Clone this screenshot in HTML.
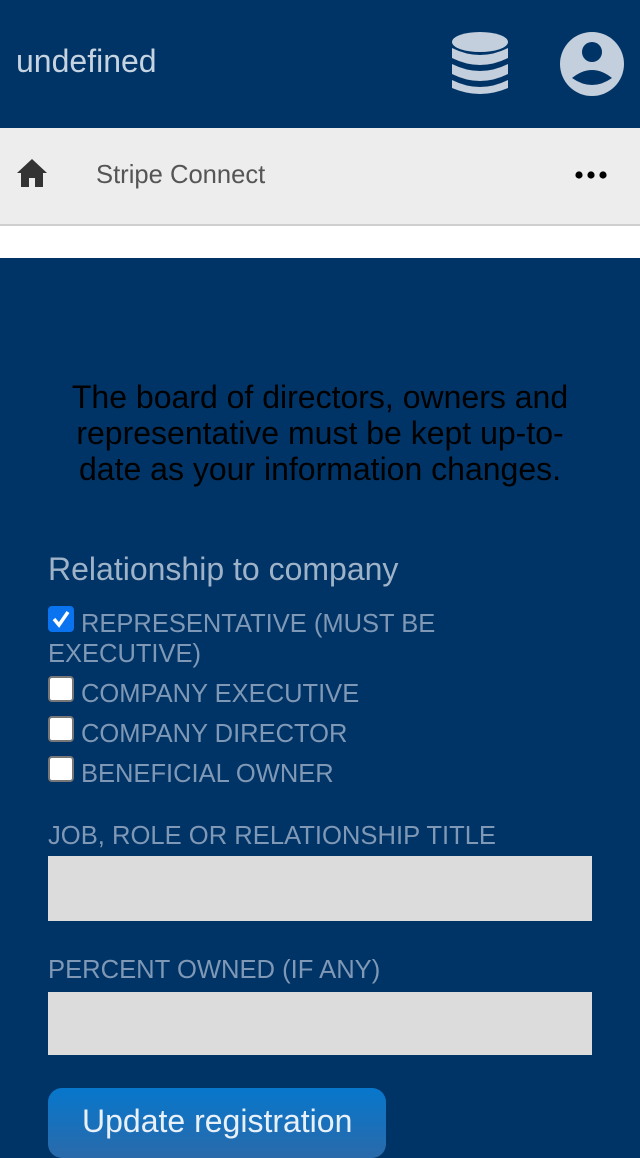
<!DOCTYPE html>
<html><head><style>
*{margin:0;padding:0;box-sizing:border-box}
body{width:640px;height:1136px;overflow:hidden;background:#003366;font-family:"Liberation Sans",sans-serif}
.hdr{position:absolute;top:0;left:0;width:640px;height:128px;background:#003366}
.hdr .t{position:absolute;left:16px;top:43px;font-size:32px;color:#c6d3e0}
.bar{position:absolute;top:128px;left:0;width:640px;height:98px;background:#ededed;border-bottom:2px solid #cfcfcf}
.bar .t{position:absolute;left:96px;top:33px;font-size:25.6px;color:#555}
.white{position:absolute;top:226px;left:0;width:640px;height:32px;background:#fff}
.p{position:absolute;top:379px;left:56px;width:528px;text-align:center;font-size:32px;line-height:36px;color:#000}
.h{position:absolute;top:551px;left:48px;font-size:32px;color:#9fb3c8}
.cb{position:absolute;left:48px;width:26px;height:26px;background:#fff;border:2px solid #777;border-radius:4px}
.lb{position:absolute;left:48px;font-size:25.5px;line-height:30px;color:#7f98b5;width:480px}
.fl{position:absolute;left:48px;font-size:25.6px;color:#7f98b5}
.in{position:absolute;left:48px;width:544px;background:#dcdcdc}
.btn{position:absolute;left:48px;top:1088px;width:338px;height:70px;border-radius:14px;background:linear-gradient(#0777cc,#2a6aaa);color:#e8f0f8;font-size:32px;padding:15px 0 0 34px}
</style></head><body>
<div class="hdr"><div class="t">undefined</div>
<svg style="position:absolute;left:450px;top:32px" width="60" height="64" viewBox="0 0 60 64"><g fill="#c3cfdc"><ellipse cx="30" cy="10" rx="28" ry="10"/><path d="M2 16 Q30 30 58 16 V26 Q30 40 2 26Z"/><path d="M2 32 Q30 46 58 32 V42 Q30 56 2 42Z"/><path d="M2 48 Q30 62 58 48 V56 Q30 68 2 56Z"/></g></svg>
<svg style="position:absolute;left:560px;top:32px" width="64" height="64" viewBox="0 0 64 64"><circle cx="32" cy="32" r="32" fill="#c3cfdc"/><circle cx="32" cy="20" r="10" fill="#003366"/><path d="M12 46 Q32 30 52 46 Q32 60 12 46Z" fill="#003366"/></svg>
</div>
<div class="bar">
<svg style="position:absolute;left:16px;top:30px" width="32" height="30" viewBox="0 0 32 30"><path d="M16 1 L1 15 H5 V29 H13 V20 H19 V29 H27 V15 H31Z" fill="#333"/></svg>
<div class="t">Stripe Connect</div>
<svg style="position:absolute;left:574px;top:42px" width="36" height="10"><circle cx="5" cy="5" r="3.6"/><circle cx="17" cy="5" r="3.6"/><circle cx="29" cy="5" r="3.6"/></svg>
</div>
<div class="white"></div>
<div class="p">The board of directors, owners and representative must be kept up-to-<br>date as your information changes.</div>
<div class="h">Relationship to company</div>
<div class="cb" style="top:606px;background:#0a74f0;border-color:#0a74f0"><svg width="22" height="22" viewBox="0 0 22 22"><path d="M4 11 L9 17 L18 4" stroke="#fff" stroke-width="3.5" fill="none"/></svg></div>
<div class="lb" style="top:609px;text-indent:33px">REPRESENTATIVE (MUST BE EXECUTIVE)</div>
<div class="cb" style="top:676px"></div><div class="lb" style="top:679px;left:81px">COMPANY EXECUTIVE</div>
<div class="cb" style="top:716px"></div><div class="lb" style="top:719px;left:81px">COMPANY DIRECTOR</div>
<div class="cb" style="top:756px"></div><div class="lb" style="top:759px;left:81px">BENEFICIAL OWNER</div>
<div class="fl" style="top:822px">JOB, ROLE OR RELATIONSHIP TITLE</div>
<div class="in" style="top:856px;height:65px"></div>
<div class="fl" style="top:956px">PERCENT OWNED (IF ANY)</div>
<div class="in" style="top:992px;height:63px"></div>
<div class="btn">Update registration</div>
</body></html>
